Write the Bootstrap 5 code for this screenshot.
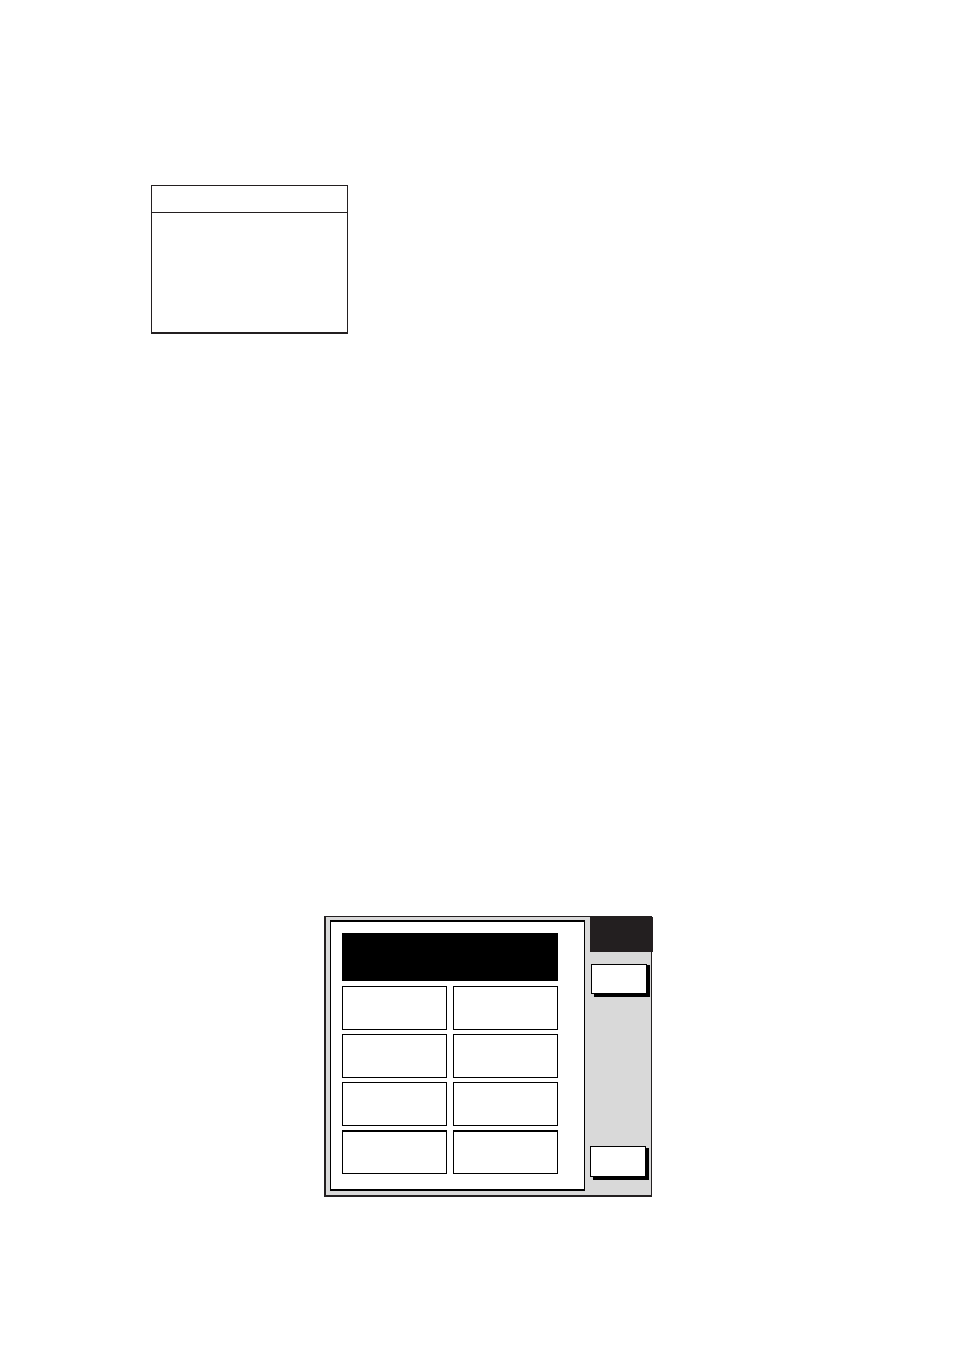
<!DOCTYPE html>
<html lang="en">
<head>
<meta charset="utf-8">
<meta name="viewport" content="width=device-width, initial-scale=1">
<title>Display</title>
<link rel="stylesheet" href="https://cdn.jsdelivr.net/npm/bootstrap@5.3.0/dist/css/bootstrap.min.css">
<style>
  :root { --ink: #231f20; --panel: #d9d9d9; }
  body { background: #fff; font-family: "Liberation Sans", Arial, sans-serif; }
  .sheet { padding: 185px 0 153px 151px; }

  /* Blank menu window */
  .menu-box { width: 197px; height: 149px; border: 1px solid var(--ink); border-bottom-width: 2px; }
  .menu-title { height: 27px; border-bottom: 1px solid var(--ink); }

  /* Instrument display */
  .device {
    width: 328px; height: 281px; margin: 582px 0 0 173px;
    background: var(--panel);
    border: solid var(--ink); border-width: 1px 1px 2px 2px;
  }
  .screen {
    width: 255px; margin: 3px 0 4px 4px; padding: 11px 26px 15px 11px;
    background: #fff;
    border: solid #000; border-width: 2px 1px;
  }
  .banner { height: 48px; margin-bottom: 5px; background: #000; }
  .cells { display: grid; grid-template-columns: 1fr 1fr; grid-auto-rows: 44px; gap: 4px 6px; }
  .cell { border: 1px solid #000; }
  .cell:nth-last-child(-n+2) { border-top-width: 2px; }

  .keys { width: 61px; margin-left: 5px; padding-bottom: 18px; }
  .keys-title { width: 63px; height: 35px; background: var(--ink); }
  .softkey, .softkey:hover, .softkey:active {
    width: 56px; background: #fff; border: 1px solid #000; border-radius: 0;
  }
  .softkey-top { height: 30px; margin: 12px 0 0 1px; box-shadow: 3px 1px #000, 3px 3px #000; }
  .softkey-bottom { height: 31px; box-shadow: 3px 2px #000, 3px 3px #000; }
</style>
</head>
<body>
<main class="sheet">
  <section class="menu-box">
    <div class="menu-title"></div>
  </section>

  <section class="device d-flex">
    <div class="screen flex-shrink-0">
      <div class="banner"></div>
      <div class="cells">
        <div class="cell"></div><div class="cell"></div>
        <div class="cell"></div><div class="cell"></div>
        <div class="cell"></div><div class="cell"></div>
        <div class="cell"></div><div class="cell"></div>
      </div>
    </div>
    <div class="keys d-flex flex-column align-items-start flex-shrink-0">
      <div class="keys-title"></div>
      <button type="button" class="btn p-0 softkey softkey-top" aria-label="Upper soft key"></button>
      <button type="button" class="btn p-0 mt-auto softkey softkey-bottom" aria-label="Lower soft key"></button>
    </div>
  </section>
</main>
<script src="https://cdn.jsdelivr.net/npm/bootstrap@5.3.0/dist/js/bootstrap.bundle.min.js"></script>
</body>
</html>
